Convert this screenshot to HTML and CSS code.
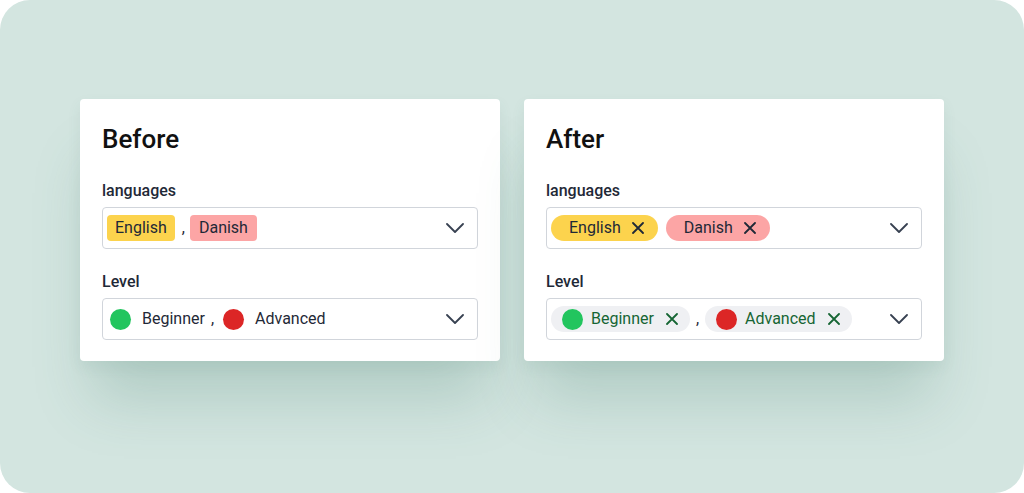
FILE: index.html
```html
<!DOCTYPE html>
<html>
<head>
<meta charset="utf-8">
<link rel="stylesheet" href="styles.css">
</head>
<body>
<div class="frame">
  <section class="card">
    <h2 class="title">Before</h2>
    <div class="fields">
      <div class="field">
        <div class="label">languages</div>
        <div class="select">
          <div class="values">
            <span class="tag tag-yellow">English</span>
            <span class="comma">,</span>
            <span class="tag tag-pink">Danish</span>
          </div>
          <svg class="chevron" viewBox="0 0 18 10" width="18" height="10"><path d="M1 1 L9 9 L17 1" fill="none" stroke="#374151" stroke-width="1.8" stroke-linecap="round" stroke-linejoin="round"/></svg>
        </div>
      </div>
      <div class="field">
        <div class="label">Level</div>
        <div class="select">
          <div class="values values-level">
            <span class="level"><span class="dot dot-green"></span>Beginner</span>
            <span class="comma comma-level">,</span>
            <span class="level"><span class="dot dot-red"></span>Advanced</span>
          </div>
          <svg class="chevron" viewBox="0 0 18 10" width="18" height="10"><path d="M1 1 L9 9 L17 1" fill="none" stroke="#374151" stroke-width="1.8" stroke-linecap="round" stroke-linejoin="round"/></svg>
        </div>
      </div>
    </div>
  </section>

  <section class="card">
    <h2 class="title">After</h2>
    <div class="fields">
      <div class="field">
        <div class="label">languages</div>
        <div class="select">
          <div class="values values-after">
            <span class="pill pill-yellow">English<svg class="x" viewBox="0 0 12 12" width="12" height="12"><path d="M1 1 L11 11 M11 1 L1 11" stroke="#1f2937" stroke-width="1.8" stroke-linecap="round"/></svg></span>
            <span class="pill pill-pink">Danish<svg class="x" viewBox="0 0 12 12" width="12" height="12"><path d="M1 1 L11 11 M11 1 L1 11" stroke="#1f2937" stroke-width="1.8" stroke-linecap="round"/></svg></span>
          </div>
          <svg class="chevron" viewBox="0 0 18 10" width="18" height="10"><path d="M1 1 L9 9 L17 1" fill="none" stroke="#374151" stroke-width="1.8" stroke-linecap="round" stroke-linejoin="round"/></svg>
        </div>
      </div>
      <div class="field">
        <div class="label">Level</div>
        <div class="select">
          <div class="values">
            <span class="lpill"><span class="dot dot-green"></span>Beginner<svg class="x" viewBox="0 0 12 12" width="12" height="12"><path d="M1 1 L11 11 M11 1 L1 11" stroke="#166534" stroke-width="1.8" stroke-linecap="round"/></svg></span>
            <span class="comma comma-after">,</span>
            <span class="lpill"><span class="dot dot-red"></span>Advanced<svg class="x" viewBox="0 0 12 12" width="12" height="12"><path d="M1 1 L11 11 M11 1 L1 11" stroke="#166534" stroke-width="1.8" stroke-linecap="round"/></svg></span>
          </div>
          <svg class="chevron" viewBox="0 0 18 10" width="18" height="10"><path d="M1 1 L9 9 L17 1" fill="none" stroke="#374151" stroke-width="1.8" stroke-linecap="round" stroke-linejoin="round"/></svg>
        </div>
      </div>
    </div>
  </section>
</div>
</body>
</html>
```

FILE: styles.css
```css
* { box-sizing: border-box; }
html, body {
  margin: 0;
  padding: 0;
  background: #ffffff;
}
body {
  font-family: Roboto, "Liberation Sans", sans-serif;
  color: #1f2937;
}
.frame {
  width: 1024px;
  height: 493px;
  border-radius: 30px;
  background: #d3e5e0;
  display: flex;
  justify-content: center;
  align-items: flex-start;
  gap: 24px;
  padding-top: 99px;
  overflow: hidden;
}
.card {
  width: 420px;
  background: #ffffff;
  border-radius: 4px;
  padding: 24px 22px 21px;
  box-shadow: 0 50px 55px -12px rgba(60, 120, 100, 0.22), 0 6px 14px rgba(60, 120, 100, 0.08);
}
.title {
  margin: 0 0 26px;
  font-size: 26px;
  line-height: 32px;
  font-weight: 500;
  color: #111111;
}
.fields {
  display: flex;
  flex-direction: column;
  gap: 23px;
}
.label {
  font-size: 16px;
  line-height: 20px;
  font-weight: 500;
  color: #1f2937;
  margin-bottom: 6px;
}
.select {
  height: 42px;
  border: 1px solid #d1d5db;
  border-radius: 4px;
  display: flex;
  align-items: center;
  justify-content: space-between;
  padding: 0 13px 0 4px;
}
.values {
  display: flex;
  align-items: center;
  font-size: 16px;
  line-height: 20px;
}
.chevron { display: block; flex: none; }
.tag {
  height: 26px;
  padding: 0 8px;
  border-radius: 4px;
  display: flex;
  align-items: center;
  color: #1f2937;
}
.tag-yellow { background: #fcd34d; }
.tag-pink { background: #fca5a5; padding: 0 9px; }
.comma {
  color: #1f2937;
  margin: 0 5px 0 7px;
}
.level {
  display: flex;
  align-items: center;
  gap: 11px;
  color: #1f2937;
}
.values-level { padding-left: 3px; }
.comma-level { margin: 0 9px 0 6px; }
.dot {
  width: 21px;
  height: 21px;
  border-radius: 50%;
  flex: none;
}
.dot-green { background: #22c55e; }
.dot-red { background: #dc2626; }
.values-after { gap: 8px; }
.pill {
  height: 26px;
  border-radius: 13px;
  padding: 0 14px 0 18px;
  display: flex;
  align-items: center;
  gap: 11px;
  color: #1f2937;
}
.pill-yellow { background: #fcd34d; }
.pill-pink { background: #fca5a5; }
.x { display: block; flex: none; }
.lpill {
  height: 26px;
  border-radius: 13px;
  background: #eff0f3;
  padding: 0 12px 0 11px;
  display: flex;
  align-items: center;
  color: #166534;
}
.lpill .dot { margin-right: 8px; }
.lpill .x { margin-left: 12px; }
.comma-after { margin: 0 6px 0 6px; }
```
